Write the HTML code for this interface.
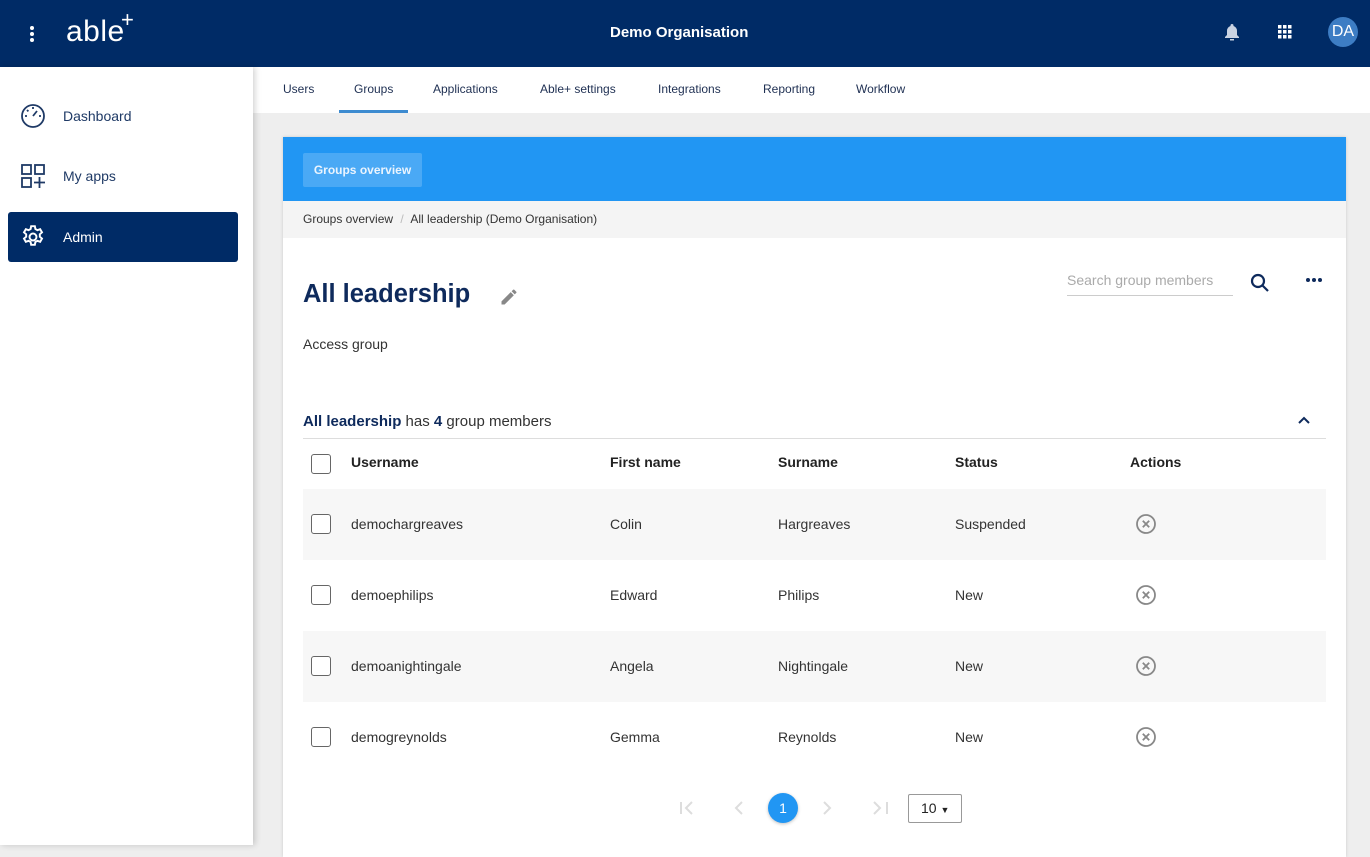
<!DOCTYPE html>
<html><head><meta charset="utf-8"><style>
*{box-sizing:border-box;margin:0;padding:0}
body{width:1370px;height:845px;overflow:hidden;font-family:"Liberation Sans",sans-serif;background:#eeeeee;position:relative;color:#222}
.top{position:absolute;left:0;top:0;width:1370px;height:67px;background:#002b66;color:#fff}
.side{position:absolute;left:0;top:67px;width:253px;height:778px;background:#fff;box-shadow:2px 0 6px rgba(0,0,0,.18);z-index:2}
.nav{position:absolute;left:8px;width:230px;height:50px;display:flex;align-items:center;font-size:14px;color:#1f3a66;border-radius:3px}
.nav svg{position:absolute;left:12px}
.nav span{position:absolute;left:55px}
.tabs{position:absolute;left:253px;top:67px;width:1117px;height:46px;background:#fff;font-size:12px;color:#1e2f52}
.tabs div{position:absolute;top:15px}
.card{position:absolute;left:283px;top:137px;width:1063px;height:720px;background:#fff;box-shadow:0 0 3px rgba(0,0,0,.15)}
.th{font-weight:bold;font-size:14px;color:#222;position:absolute}
.row{position:absolute;left:20px;width:1023px;height:71px}
.row.g{background:#f7f7f7}
.cb{position:absolute;left:8px;width:20px;height:20px;border:1.5px solid #666;border-radius:3px;background:#fff}
.cell{position:absolute;font-size:14px;color:#333}
</style></head><body>
<div class="top">
 <div style="position:absolute;left:30px;top:26px;width:4px;height:4px;background:#fff;border-radius:2px;box-shadow:0 6px 0 #fff,0 12px 0 #fff"></div>
 <div style="position:absolute;left:66px;top:15px;font-size:30px;letter-spacing:0.5px;line-height:34px">able</div>
 <div style="position:absolute;left:121px;top:8px;font-size:22px;color:#fff;line-height:24px">+</div>
 <div style="position:absolute;left:610px;top:24px;font-size:15px;font-weight:bold">Demo Organisation</div>
 <svg style="position:absolute;left:1224px;top:23px" width="16" height="18" viewBox="0 0 16 18"><path d="M8 1a1.5 1.5 0 0 1 1.5 1.5v.5A5 5 0 0 1 13 8v4l2 2v1H1v-1l2-2V8a5 5 0 0 1 3.5-5v-.5A1.5 1.5 0 0 1 8 1z" fill="#c9d3e3"/><rect x="6" y="16" width="4" height="1.5" fill="#c9d3e3"/></svg>
 <svg style="position:absolute;left:1278px;top:25px" width="14" height="14" viewBox="0 0 14 14" fill="#fff"><rect x="0" y="0" width="3.5" height="3.5"/><rect x="5" y="0" width="3.5" height="3.5"/><rect x="10" y="0" width="3.5" height="3.5"/><rect x="0" y="5" width="3.5" height="3.5"/><rect x="5" y="5" width="3.5" height="3.5"/><rect x="10" y="5" width="3.5" height="3.5"/><rect x="0" y="10" width="3.5" height="3.5"/><rect x="5" y="10" width="3.5" height="3.5"/><rect x="10" y="10" width="3.5" height="3.5"/></svg>
 <div style="position:absolute;left:1328px;top:17px;width:30px;height:30px;border-radius:50%;background:#3d7dc4;font-size:16px;line-height:30px;text-align:center;color:#fff">DA</div>
</div>
<div class="side">
 <div class="nav" style="top:24px"><svg width="26" height="26" viewBox="0 0 26 26" fill="none" stroke="#1f3a66" stroke-width="1.8"><circle cx="13" cy="13" r="11"/><path d="M13 13l4-5M13 4v2M5 13h2M19 13h2M7 7l1.4 1.4"/></svg><span>Dashboard</span></div>
 <div class="nav" style="top:84px"><svg width="26" height="26" viewBox="0 0 26 26" fill="none" stroke="#1f3a66" stroke-width="1.8"><rect x="2" y="2" width="9" height="9"/><rect x="15" y="2" width="9" height="9"/><rect x="2" y="15" width="9" height="9"/><path d="M19.5 14v11M14 19.5h11"/></svg><span>My apps</span></div>
 <div class="nav" style="top:145px;background:#002b66;color:#fff"><svg width="26" height="26" viewBox="0 0 24 24" fill="none" stroke="#fff" stroke-width="1.8"><circle cx="12" cy="12" r="3.2"/><path d="M10.3 2h3.4l.5 2.6 1.9 1.1 2.5-.9 1.7 2.9-2 1.8v2.2l2 1.8-1.7 2.9-2.5-.9-1.9 1.1-.5 2.6h-3.4l-.5-2.6-1.9-1.1-2.5.9-1.7-2.9 2-1.8V9.5l-2-1.8 1.7-2.9 2.5.9 1.9-1.1z"/></svg><span>Admin</span></div>
</div>
<div class="tabs">
 <div style="left:30px">Users</div>
 <div style="left:101px">Groups</div>
 <div style="left:180px">Applications</div>
 <div style="left:287px">Able+ settings</div>
 <div style="left:405px">Integrations</div>
 <div style="left:510px">Reporting</div>
 <div style="left:603px">Workflow</div>
 <div style="position:absolute;left:86px;top:43px;width:69px;height:3px;background:#3d8bd0"></div>
</div>
<div class="card">
 <div style="position:absolute;left:0;top:0;width:1063px;height:64px;background:#2196f3"></div>
 <div style="position:absolute;left:20px;top:16px;width:119px;height:34px;background:#4aa9f5;border-radius:2px;color:#eaf4fe;font-size:12px;font-weight:bold;line-height:34px;text-align:center">Groups overview</div>
 <div style="position:absolute;left:0;top:64px;width:1063px;height:37px;background:#f4f4f4;font-size:12px;color:#333;padding:11px 20px">Groups overview <span style="color:#bbb;margin:0 4px">/</span> All leadership (Demo Organisation)</div>
 <div style="position:absolute;left:20px;top:143px;font-size:25.5px;font-weight:bold;color:#0e2a5c">All leadership</div>
 <svg style="position:absolute;left:216px;top:150px" width="20" height="20" viewBox="0 0 24 24"><path fill="#888" d="M3 17.25V21h3.75L17.81 9.94l-3.75-3.75L3 17.25zM20.71 7.04a1 1 0 0 0 0-1.41l-2.34-2.34a1 1 0 0 0-1.41 0l-1.83 1.83 3.75 3.75 1.83-1.83z"/></svg>
 <div style="position:absolute;left:20px;top:199px;font-size:14px;color:#333">Access group</div>
 <div style="position:absolute;left:784px;top:135px;width:166px;height:24px;border-bottom:1px solid #ccc;font-size:14px;color:#aaa">Search group members</div>
 <svg style="position:absolute;left:967px;top:136px" width="20" height="20" viewBox="0 0 20 20" fill="none" stroke="#0e2a5c" stroke-width="2.2"><circle cx="8" cy="8" r="6"/><path d="M12.5 12.5l5.5 5.5"/></svg>
 <div style="position:absolute;left:1023px;top:141px;width:4px;height:4px;border-radius:2px;background:#0e2a5c;box-shadow:6px 0 0 #0e2a5c,12px 0 0 #0e2a5c"></div>
 <div style="position:absolute;left:20px;top:276px;font-size:15px;color:#333"><b style="color:#0e2a5c">All leadership</b> has <b style="color:#0e2a5c">4</b> group members</div>
 <svg style="position:absolute;left:1014px;top:278px" width="14" height="10" viewBox="0 0 14 10" fill="none" stroke="#0e2a5c" stroke-width="2"><path d="M2 8l5-5 5 5"/></svg>
 <div style="position:absolute;left:20px;top:301px;width:1023px;height:1px;background:#ddd"></div>
 <div class="row" style="top:302px"><div class="cb" style="top:15px"></div>
  <div class="th" style="left:48px;top:15px">Username</div><div class="th" style="left:307px;top:15px">First name</div><div class="th" style="left:475px;top:15px">Surname</div><div class="th" style="left:652px;top:15px">Status</div><div class="th" style="left:827px;top:15px">Actions</div></div>
 <div class="row g" style="top:352px"><div class="cb" style="top:25px"></div><div class="cell" style="left:48px;top:27px">demochargreaves</div><div class="cell" style="left:307px;top:27px">Colin</div><div class="cell" style="left:475px;top:27px">Hargreaves</div><div class="cell" style="left:652px;top:27px">Suspended</div><svg style="position:absolute;left:832px;top:24px" width="22" height="22" viewBox="0 0 22 22" fill="none" stroke="#888" stroke-width="1.8"><circle cx="11" cy="11" r="9"/><path d="M7.8 7.8l6.4 6.4M14.2 7.8l-6.4 6.4"/></svg></div>
 <div class="row" style="top:423px"><div class="cb" style="top:25px"></div><div class="cell" style="left:48px;top:27px">demoephilips</div><div class="cell" style="left:307px;top:27px">Edward</div><div class="cell" style="left:475px;top:27px">Philips</div><div class="cell" style="left:652px;top:27px">New</div><svg style="position:absolute;left:832px;top:24px" width="22" height="22" viewBox="0 0 22 22" fill="none" stroke="#888" stroke-width="1.8"><circle cx="11" cy="11" r="9"/><path d="M7.8 7.8l6.4 6.4M14.2 7.8l-6.4 6.4"/></svg></div>
 <div class="row g" style="top:494px"><div class="cb" style="top:25px"></div><div class="cell" style="left:48px;top:27px">demoanightingale</div><div class="cell" style="left:307px;top:27px">Angela</div><div class="cell" style="left:475px;top:27px">Nightingale</div><div class="cell" style="left:652px;top:27px">New</div><svg style="position:absolute;left:832px;top:24px" width="22" height="22" viewBox="0 0 22 22" fill="none" stroke="#888" stroke-width="1.8"><circle cx="11" cy="11" r="9"/><path d="M7.8 7.8l6.4 6.4M14.2 7.8l-6.4 6.4"/></svg></div>
 <div class="row" style="top:565px"><div class="cb" style="top:25px"></div><div class="cell" style="left:48px;top:27px">demogreynolds</div><div class="cell" style="left:307px;top:27px">Gemma</div><div class="cell" style="left:475px;top:27px">Reynolds</div><div class="cell" style="left:652px;top:27px">New</div><svg style="position:absolute;left:832px;top:24px" width="22" height="22" viewBox="0 0 22 22" fill="none" stroke="#888" stroke-width="1.8"><circle cx="11" cy="11" r="9"/><path d="M7.8 7.8l6.4 6.4M14.2 7.8l-6.4 6.4"/></svg></div>
 <svg style="position:absolute;left:396px;top:663px" width="220" height="16" viewBox="0 0 220 16" fill="none" stroke="#ddd" stroke-width="2"><path d="M2 2v12M13 2l-6 6 6 6"/><path d="M63 2l-6 6 6 6"/><path d="M145 2l6 6-6 6"/><path d="M195 2l6 6-6 6M208 2v12"/></svg>
 <div style="position:absolute;left:485px;top:656px;width:30px;height:30px;border-radius:50%;background:#2196f3;color:#fff;font-size:14px;line-height:30px;text-align:center;box-shadow:0 1px 3px rgba(0,0,0,.25)">1</div>
 <div style="position:absolute;left:625px;top:657px;width:54px;height:29px;border:1px solid #999;border-radius:2px;font-size:14px;color:#222;line-height:27px;padding-left:12px">10 <span style="font-size:9px">&#9660;</span></div>
</div>
</body></html>
